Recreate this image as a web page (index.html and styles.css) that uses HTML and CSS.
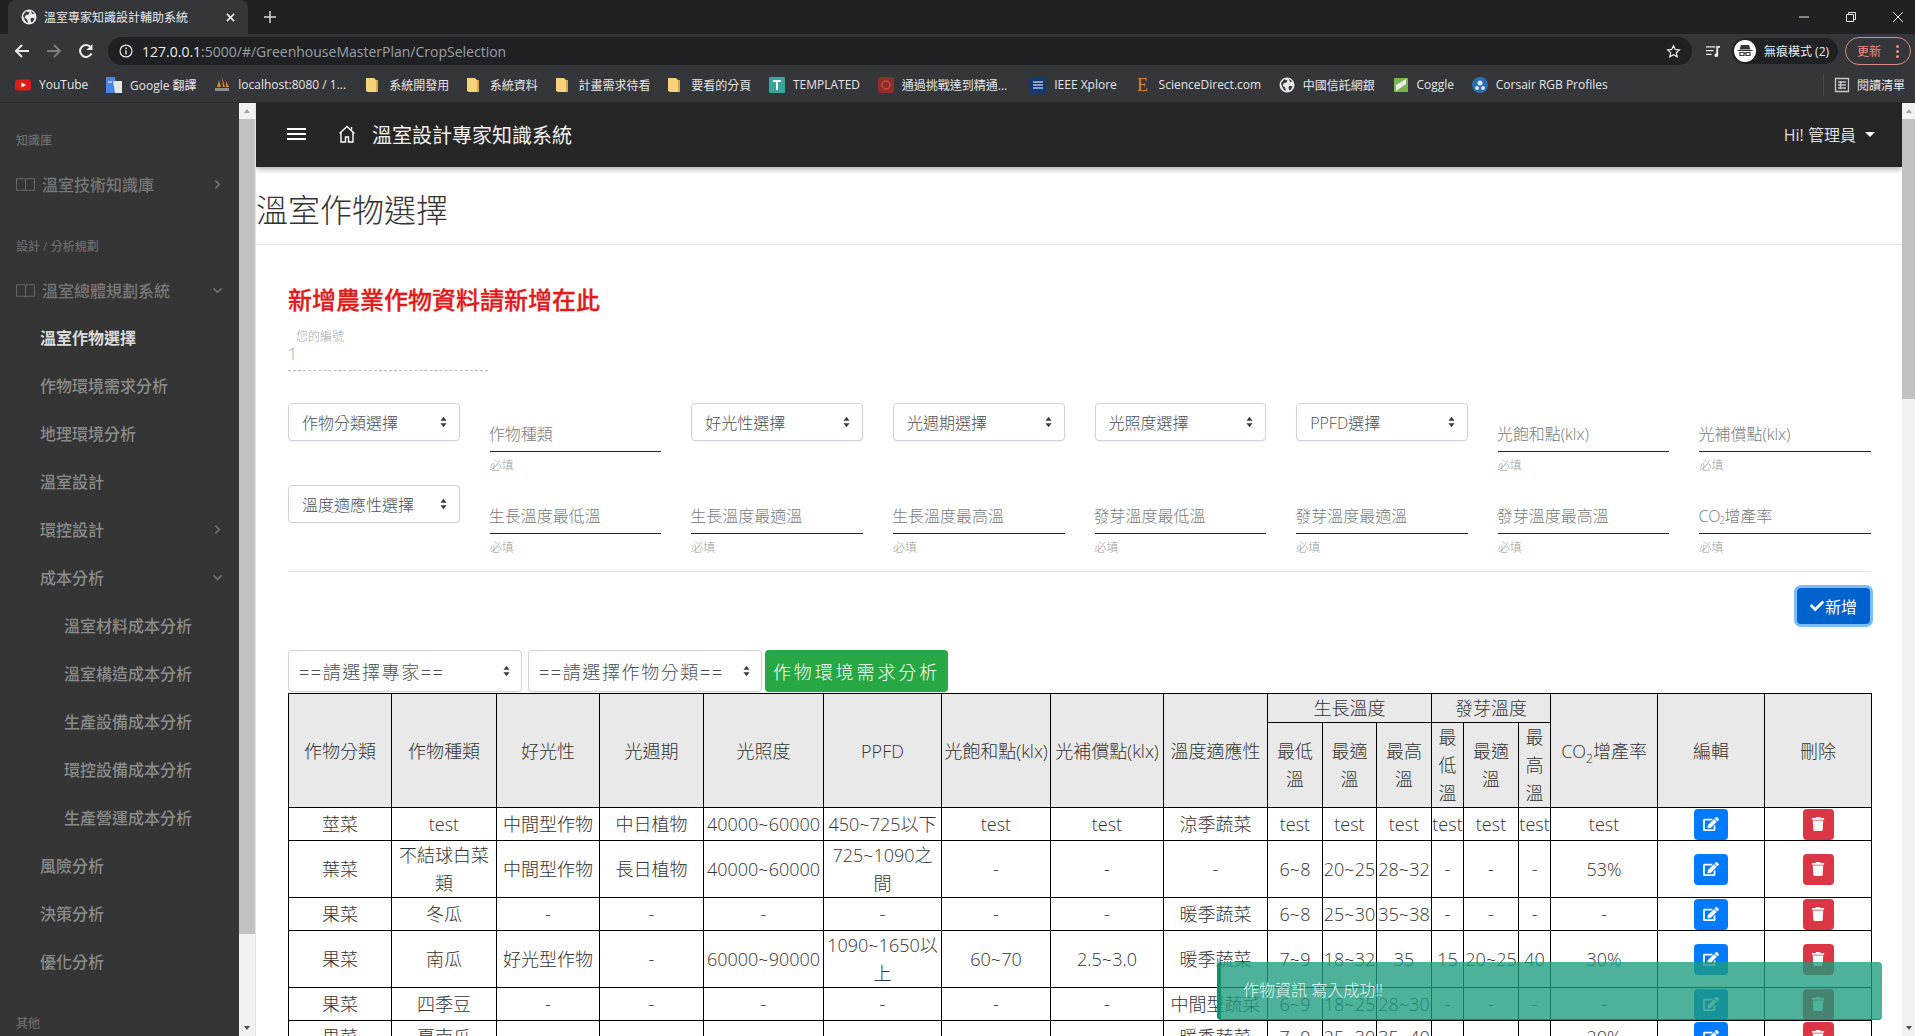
FILE: index.html
```html
<!DOCTYPE html>
<html lang="zh-Hant">
<head>
<meta charset="utf-8">
<title>溫室專家知識設計輔助系統</title>
<link rel="stylesheet" href="styles.css">
</head>
<body>

<svg class="sprites" width="0" height="0">
  <symbol id="i-edit" viewBox="0 0 576 512"><path fill="currentColor" d="M402.6 83.2l90.2 90.2c3.8 3.8 3.8 10 0 13.8L274.4 405.6l-92.8 10.3c-12.4 1.4-22.9-9.1-21.5-21.5l10.3-92.8L388.8 83.2c3.8-3.8 10-3.8 13.8 0zm162-22.9l-48.8-48.8c-15.2-15.2-39.9-15.2-55.2 0l-35.4 35.4c-3.8 3.8-3.8 10 0 13.8l90.2 90.2c3.8 3.8 10 3.8 13.8 0l35.4-35.4c15.2-15.3 15.2-40 0-55.2zM384 346.2V448H64V128h229.8c3.2 0 6.2-1.3 8.5-3.5l40-40c7.6-7.6 2.2-20.5-8.5-20.5H48C21.5 64 0 85.5 0 112v352c0 26.5 21.5 48 48 48h352c26.5 0 48-21.5 48-48V306.2c0-10.7-12.9-16-20.5-8.5l-40 40c-2.2 2.3-3.5 5.3-3.5 8.5z"/></symbol>
  <symbol id="i-trash" viewBox="0 0 448 512"><path fill="currentColor" d="M432 32H312l-9.4-18.7A24 24 0 0 0 281.1 0H166.8a23.72 23.72 0 0 0-21.4 13.3L136 32H16A16 16 0 0 0 0 48v32a16 16 0 0 0 16 16h416a16 16 0 0 0 16-16V48a16 16 0 0 0-16-16zM53.2 467a48 48 0 0 0 47.9 45h245.8a48 48 0 0 0 47.9-45L416 128H32z"/></symbol>
  <symbol id="i-globe" viewBox="0 0 16 16"><circle cx="8" cy="8" r="7.5" fill="currentColor"/><path fill="#35363a" d="M5 2.2 8.5 3.5 7.5 5.5 5 6 3.5 8.5 6 10.5 7 14 5 13 3 9.5 2 6.5zM10 9h3.5L12 12.5 10.5 13.5 9.5 11zM10 2l3.5 2.5-2.5.5z"/></symbol>
  <symbol id="i-folder" viewBox="0 0 12 16"><path fill="#f6d27a" d="M0 1h8l2 2v12H2l-2-1z"/><path fill="#d9a93f" d="M10 3h2v12h-2z"/></symbol>
  <symbol id="i-book" viewBox="0 0 18 14"><path fill="none" stroke="currentColor" d="M.5 1.5h7q1.500 0 1.500 1.500 0-1.500 1.500-1.500h7v11h-7q-1.500 0-1.500 1-0-1-1.500-1h-7zM9 3v10"/></symbol>
  <symbol id="i-chev-r" viewBox="0 0 8 12"><path fill="none" stroke="currentColor" stroke-width="2" d="M1.500 1.500 6 6l-4.500 4.500"/></symbol>
  <symbol id="i-chev-d" viewBox="0 0 12 8"><path fill="none" stroke="currentColor" stroke-width="2" d="M1.500 1.500 6 6l4.500-4.500"/></symbol>
  <symbol id="i-updown" viewBox="0 0 8 14"><path fill="currentColor" d="M4 1 7.500 5.500H.5zM4 13 .5 8.500h7z"/></symbol>
</svg>

<!-- browser frame -->
<div class="tabstrip">
  <div class="tab">
    <svg class="ic16 light"><use href="#i-globe"/></svg>
    <span class="tab-title">溫室專家知識設計輔助系統</span>
    <svg class="tab-close" viewBox="0 0 10 10"><path stroke="#e8eaed" stroke-width="1.800" d="M1 1l8 8M9 1l-8 8"/></svg>
  </div>
  <svg class="tab-new" viewBox="0 0 12 12"><path stroke="#d5d7da" stroke-width="1.500" d="M6 0v12M0 6h12"/></svg>
  <div class="win-btns">
    <svg viewBox="0 0 12 12"><path stroke="#e8eaed" d="M1 6h10"/></svg>
    <svg viewBox="0 0 12 12"><path fill="none" stroke="#e8eaed" d="M1.500 3.500h7v7h-7zM3.500 3.500v-2h7v7h-2"/></svg>
    <svg viewBox="0 0 12 12"><path stroke="#e8eaed" d="M1 1l10 10M11 1 1 11"/></svg>
  </div>
</div>

<div class="toolbar">
  <svg class="nav-ic" viewBox="0 0 16 16"><path fill="none" stroke="#e8eaed" stroke-width="2" d="M15 8H2M8 2 2 8l6 6"/></svg>
  <svg class="nav-ic" viewBox="0 0 16 16"><path fill="none" stroke="#7b7d80" stroke-width="2" d="M1 8h13M8 2l6 6-6 6"/></svg>
  <svg class="nav-ic" viewBox="0 0 16 16"><path fill="none" stroke="#e8eaed" stroke-width="2" d="M13.500 10.500A6 6 0 1 1 13 4.500"/><path fill="#e8eaed" d="M14.500 1v6h-6z"/></svg>
  <div class="omnibox">
    <svg class="info" viewBox="0 0 16 16"><circle cx="8" cy="8" r="6.800" fill="none" stroke="#e8eaed" stroke-width="1.400"/><path stroke="#e8eaed" stroke-width="1.600" d="M8 7v5M8 4v1.800"/></svg>
    <span class="url"><b>127.0.0.1</b>:5000/#/GreenhouseMasterPlan/CropSelection</span>
    <svg class="star" viewBox="0 0 16 16"><path fill="none" stroke="#e8eaed" stroke-width="1.300" d="M8 1.800l1.900 4 4.300.5-3.200 3 .9 4.300L8 11.400l-3.900 2.200.9-4.300-3.200-3 4.300-.5z"/></svg>
  </div>
  <svg class="media" viewBox="0 0 16 14"><path stroke="#e8eaed" stroke-width="1.300" d="M0 2h10M0 6h8M0 10h6"/><path fill="#e8eaed" d="M11 1h4v2h-2v8a2 2 0 1 1-2-2z"/></svg>
  <div class="incognito">
    <svg class="avatar" viewBox="0 0 22 22"><circle cx="11" cy="11" r="11" fill="#fff"/><path fill="#35363a" d="M7 5h8l1.500 4.500h-11zM3.500 10h15v1h-15z"/><path fill="none" stroke="#35363a" stroke-width="1.200" d="M6 12.500h4v3h-4zM12 12.500h4v3h-4zM10 13.500h2"/></svg>
    <span>無痕模式 (2)</span>
  </div>
  <div class="update"><span>更新</span><i></i></div>
</div>

<div class="bookmarks">
  <a class="bm"><svg class="ic16" viewBox="0 0 16 16"><rect y="2.500" width="16" height="11" rx="3" fill="#e01b1b"/><path fill="#fff" d="M6.500 5.500 11 8l-4.500 2.500z"/></svg>YouTube</a>
  <a class="bm"><svg class="ic16" viewBox="0 0 16 16"><path fill="#4a86e8" d="M0 0h9l2 16H0z"/><path fill="#e4e6e8" d="M7 4h9v12H9z"/><path stroke="#fff" d="M2 5h4"/></svg>Google 翻譯</a>
  <a class="bm bm-wide"><svg class="ic16" viewBox="0 0 16 16"><path fill="#d98a2b" d="M8 0l3 10H9zM5 3l2 7H3zM12 4l3 6h-3z"/><path fill="#8d8f91" d="M1 11h14v3H1z"/></svg>localhost:8080 / 1...</a>
  <a class="bm"><svg class="ic-f"><use href="#i-folder"/></svg>系統開發用</a>
  <a class="bm"><svg class="ic-f"><use href="#i-folder"/></svg>系統資料</a>
  <a class="bm"><svg class="ic-f"><use href="#i-folder"/></svg>計畫需求待看</a>
  <a class="bm"><svg class="ic-f"><use href="#i-folder"/></svg>要看的分頁</a>
  <a class="bm"><svg class="ic16" viewBox="0 0 16 16"><rect width="16" height="16" rx="1" fill="#35a79c"/><path stroke="#fff" stroke-width="2" d="M4 4h8M8 4v9"/></svg>TEMPLATED</a>
  <a class="bm bm-gap"><svg class="ic16" viewBox="0 0 16 16"><rect width="16" height="16" rx="2" fill="#8c2f2b"/><circle cx="8" cy="8" r="4" fill="none" stroke="#d0473f" stroke-width="1.500"/></svg>通過挑戰達到精通...</a>
  <a class="bm"><svg class="ic16" viewBox="0 0 16 16"><rect width="16" height="16" fill="#123a78"/><path stroke="#fff" d="M3 5h10M3 8h10M3 11h10"/></svg>IEEE Xplore</a>
  <a class="bm"><span class="glyph-e">E</span>ScienceDirect.com</a>
  <a class="bm"><svg class="ic16 light"><use href="#i-globe"/></svg>中國信託網銀</a>
  <a class="bm"><svg class="ic16" viewBox="0 0 16 16"><path fill="#7ab648" d="M1 1h14v14H1z"/><path fill="#e8eaed" d="M3 8l10-6v5L3 14z"/></svg>Coggle</a>
  <a class="bm"><svg class="ic16" viewBox="0 0 16 16"><circle cx="8" cy="8" r="8" fill="#2a6fb0"/><circle cx="8" cy="6" r="2.500" fill="#d6e6f5"/><circle cx="5" cy="11" r="2" fill="#d6e6f5"/><circle cx="11" cy="11" r="2" fill="#d6e6f5"/></svg>Corsair RGB Profiles</a>
  <div class="reading">
    <svg class="ic16" viewBox="0 0 16 16"><path fill="none" stroke="#c4c7c9" stroke-width="1.300" d="M1.500 1.500h13v13h-13zM4 5h8M4 8h8M4 11h8M6.500 4v8"/></svg>閱讀清單
  </div>
</div>

<!-- app -->
<div class="app">
  <aside class="sidebar">
    <nav class="side-nav">
      <p class="side-sec side-sec-first">知識庫</p>
      <a class="side-top"><svg class="book"><use href="#i-book"/></svg>溫室技術知識庫<svg class="chev-r"><use href="#i-chev-r"/></svg></a>
      <p class="side-sec">設計 / 分析規劃</p>
      <a class="side-top"><svg class="book"><use href="#i-book"/></svg>溫室總體規劃系統<svg class="chev-d"><use href="#i-chev-d"/></svg></a>
      <a class="side-item active">溫室作物選擇</a>
      <a class="side-item">作物環境需求分析</a>
      <a class="side-item">地理環境分析</a>
      <a class="side-item">溫室設計</a>
      <a class="side-item">環控設計<svg class="chev-r"><use href="#i-chev-r"/></svg></a>
      <a class="side-item">成本分析<svg class="chev-d"><use href="#i-chev-d"/></svg></a>
      <a class="side-item sub">溫室材料成本分析</a>
      <a class="side-item sub">溫室構造成本分析</a>
      <a class="side-item sub">生產設備成本分析</a>
      <a class="side-item sub">環控設備成本分析</a>
      <a class="side-item sub">生產營運成本分析</a>
      <a class="side-item">風險分析</a>
      <a class="side-item">決策分析</a>
      <a class="side-item">優化分析</a>
      <p class="side-sec side-sec-last">其他</p>
    </nav>
    <div class="scrollbar side-bar">
      <span class="arrow up"></span>
      <span class="thumb"></span>
      <span class="arrow down"></span>
    </div>
  </aside>

  <main class="main">
    <header class="topbar">
      <span class="burger"><i></i><i></i><i></i></span>
      <svg class="home" viewBox="0 0 18 18"><path fill="none" stroke="#fff" stroke-width="1.400" d="M1.500 8.500 9 1.500l7.500 7M3 7.500v9.500h4.500v-5h3v5H15v-9.500"/><path stroke="#fff" stroke-width="1.400" d="M13.500 2v3"/></svg>
      <span class="brand">溫室設計專家知識系統</span>
      <span class="user">Hi! 管理員<i class="caret"></i></span>
    </header>

    <div class="page">
      <h1 class="page-title">溫室作物選擇</h1>
      <div class="page-body">
        <h2 class="notice">新增農業作物資料請新增在此</h2>
        <div class="your-id">
          <label>您的編號</label>
          <span>1</span>
        </div>

        <form class="crop-form">
          <div class="select">作物分類選擇<svg><use href="#i-updown"/></svg></div>
          <div class="field"><span class="ph">作物種類</span><small>必填</small></div>
          <div class="select">好光性選擇<svg><use href="#i-updown"/></svg></div>
          <div class="select">光週期選擇<svg><use href="#i-updown"/></svg></div>
          <div class="select">光照度選擇<svg><use href="#i-updown"/></svg></div>
          <div class="select">PPFD選擇<svg><use href="#i-updown"/></svg></div>
          <div class="field"><span class="ph">光飽和點(klx)</span><small>必填</small></div>
          <div class="field"><span class="ph">光補償點(klx)</span><small>必填</small></div>

          <div class="select">溫度適應性選擇<svg><use href="#i-updown"/></svg></div>
          <div class="field"><span class="ph">生長溫度最低溫</span><small>必填</small></div>
          <div class="field"><span class="ph">生長溫度最適溫</span><small>必填</small></div>
          <div class="field"><span class="ph">生長溫度最高溫</span><small>必填</small></div>
          <div class="field"><span class="ph">發芽溫度最低溫</span><small>必填</small></div>
          <div class="field"><span class="ph">發芽溫度最適溫</span><small>必填</small></div>
          <div class="field"><span class="ph">發芽溫度最高溫</span><small>必填</small></div>
          <div class="field"><span class="ph">CO<sub>2</sub>增產率</span><small>必填</small></div>
        </form>

        <div class="form-actions">
          <button class="btn-add" type="button"><svg viewBox="0 0 512 512"><path fill="currentColor" d="M173.898 439.404l-166.4-166.4c-9.997-9.997-9.997-26.206 0-36.204l36.203-36.204c9.997-9.998 26.207-9.998 36.204 0L192 312.690 432.095 72.596c9.997-9.997 26.207-9.997 36.204 0l36.203 36.204c9.997 9.997 9.997 26.206 0 36.204l-294.400 294.401c-9.998 9.997-26.207 9.997-36.204-.001z"/></svg>新增</button>
        </div>

        <div class="filters">
          <div class="select select-lg">==請選擇專家==<svg><use href="#i-updown"/></svg></div>
          <div class="select select-lg">==請選擇作物分類==<svg><use href="#i-updown"/></svg></div>
          <button class="btn-analyse" type="button">作物環境需求分析</button>
        </div>

        <table class="crop-table">
          <colgroup>
            <col><col><col><col><col><col><col><col><col><col><col><col><col><col><col><col><col><col>
          </colgroup>
          <thead>
            <tr class="head-a">
              <th rowspan="2">作物分類</th>
              <th rowspan="2">作物種類</th>
              <th rowspan="2">好光性</th>
              <th rowspan="2">光週期</th>
              <th rowspan="2">光照度</th>
              <th rowspan="2">PPFD</th>
              <th rowspan="2">光飽和點(klx)</th>
              <th rowspan="2">光補償點(klx)</th>
              <th rowspan="2">溫度適應性</th>
              <th colspan="3">生長溫度</th>
              <th colspan="3">發芽溫度</th>
              <th rowspan="2">CO<sub>2</sub>增產率</th>
              <th rowspan="2">編輯</th>
              <th rowspan="2">刪除</th>
            </tr>
            <tr class="head-b">
              <th>最低溫</th><th>最適溫</th><th>最高溫</th>
              <th>最低溫</th><th>最適溫</th><th>最高溫</th>
            </tr>
          </thead>
          <tbody>
            <tr>
              <td>莖菜</td><td>test</td><td>中間型作物</td><td>中日植物</td><td>40000~60000</td><td>450~725以下</td><td>test</td><td>test</td><td>涼季蔬菜</td>
              <td>test</td><td>test</td><td>test</td><td>test</td><td>test</td><td>test</td><td>test</td>
              <td><a class="act edit"><svg><use href="#i-edit"/></svg></a></td>
              <td><a class="act del"><svg><use href="#i-trash"/></svg></a></td>
            </tr>
            <tr>
              <td>葉菜</td><td>不結球白菜類</td><td>中間型作物</td><td>長日植物</td><td>40000~60000</td><td>725~1090之間</td><td>-</td><td>-</td><td>-</td>
              <td>6~8</td><td>20~25</td><td>28~32</td><td>-</td><td>-</td><td>-</td><td>53%</td>
              <td><a class="act edit"><svg><use href="#i-edit"/></svg></a></td>
              <td><a class="act del"><svg><use href="#i-trash"/></svg></a></td>
            </tr>
            <tr>
              <td>果菜</td><td>冬瓜</td><td>-</td><td>-</td><td>-</td><td>-</td><td>-</td><td>-</td><td>暖季蔬菜</td>
              <td>6~8</td><td>25~30</td><td>35~38</td><td>-</td><td>-</td><td>-</td><td>-</td>
              <td><a class="act edit"><svg><use href="#i-edit"/></svg></a></td>
              <td><a class="act del"><svg><use href="#i-trash"/></svg></a></td>
            </tr>
            <tr>
              <td>果菜</td><td>南瓜</td><td>好光型作物</td><td>-</td><td>60000~90000</td><td>1090~1650以上</td><td>60~70</td><td>2.5~3.0</td><td>暖季蔬菜</td>
              <td>7~9</td><td>18~32</td><td>35</td><td>15</td><td>20~25</td><td>40</td><td>30%</td>
              <td><a class="act edit"><svg><use href="#i-edit"/></svg></a></td>
              <td><a class="act del"><svg><use href="#i-trash"/></svg></a></td>
            </tr>
            <tr>
              <td>果菜</td><td>四季豆</td><td>-</td><td>-</td><td>-</td><td>-</td><td>-</td><td>-</td><td>中間型蔬菜</td>
              <td>6~9</td><td>18~25</td><td>28~30</td><td>-</td><td>-</td><td>-</td><td>-</td>
              <td><a class="act edit"><svg><use href="#i-edit"/></svg></a></td>
              <td><a class="act del"><svg><use href="#i-trash"/></svg></a></td>
            </tr>
            <tr>
              <td>果菜</td><td>夏南瓜</td><td>-</td><td>-</td><td>-</td><td>-</td><td>-</td><td>-</td><td>暖季蔬菜</td>
              <td>7~9</td><td>25~30</td><td>35~40</td><td>-</td><td>-</td><td>-</td><td>20%</td>
              <td><a class="act edit"><svg><use href="#i-edit"/></svg></a></td>
              <td><a class="act del"><svg><use href="#i-trash"/></svg></a></td>
            </tr>
          </tbody>
        </table>
      </div>
    </div>

    <div class="toast">作物資訊 寫入成功!!</div>
  </main>

  <div class="scrollbar main-bar">
    <span class="arrow up"></span>
    <span class="thumb"></span>
    <span class="arrow down"></span>
  </div>
</div>

</body>
</html>
```

FILE: styles.css
```css
* {
  box-sizing: border-box;
}

html, body {
  height: 100%;
  margin: 0;
  overflow: hidden;
}

body {
  display: flex;
  flex-direction: column;
  font-family: "Open Sans", "Noto Sans CJK TC", sans-serif;
  font-size: 16px;
  background-color: white;
}

.sprites {
  position: absolute;
}

/* browser frame */
.tabstrip {
  display: flex;
  align-items: center;
  flex: 0 0 34px;
  background-color: #202124;
  padding-left: 8px;
}

.tab {
  display: flex;
  align-items: center;
  width: 240px;
  height: 34px;
  padding: 0 11px 0 13px;
  background-color: #35363a;
  border-radius: 8px 8px 0 0;
  color: #e8eaed;
  font-size: 12px;
}

.tab-title {
  flex: 1;
  margin-left: 7px;
  white-space: nowrap;
}

.tab-close {
  width: 9px;
  height: 9px;
  margin-right: 2px;
}

.tab-new {
  width: 12px;
  height: 12px;
  margin-left: 16px;
}

.win-btns {
  display: flex;
  gap: 35px;
  margin-left: auto;
  margin-right: 11px;
}

.win-btns svg {
  width: 12px;
  height: 12px;
}

.ic16 {
  flex: none;
  width: 16px;
  height: 16px;
}

.light {
  color: #e8eaed;
}

.toolbar {
  display: flex;
  align-items: center;
  flex: 0 0 34px;
  padding-left: 14px;
  background-color: #35363a;
}

.nav-ic {
  width: 16px;
  height: 16px;
  margin-right: 16px;
}

.omnibox {
  display: flex;
  align-items: center;
  width: 1584px;
  height: 28px;
  margin-left: -2px;
  padding: 0 11px;
  background-color: #202124;
  border-radius: 14px;
}

.info {
  width: 14px;
  height: 14px;
}

.url {
  flex: 1;
  margin-left: 9px;
  color: #9aa0a6;
  font-size: 14px;
  white-space: nowrap;
}

.url b {
  color: #e8eaed;
  font-weight: 400;
}

.star {
  width: 15px;
  height: 15px;
  margin-right: 0;
}

.media {
  width: 15px;
  height: 13px;
  margin-left: 14px;
}

.incognito {
  display: flex;
  align-items: center;
  height: 26px;
  margin-left: 11px;
  padding: 0 9px 0 2px;
  background-color: #202124;
  border-radius: 13px;
  color: #e8eaed;
  font-size: 12px;
  white-space: nowrap;
}

.avatar {
  width: 22px;
  height: 22px;
  margin-right: 8px;
}

.update {
  display: flex;
  align-items: center;
  justify-content: space-between;
  width: 66px;
  height: 28px;
  margin-left: 7px;
  padding: 0 11px 0 11px;
  border: 1px solid #d98d86;
  border-radius: 14px;
  color: #f28b82;
  font-size: 12px;
}

.update i {
  width: 3px;
  height: 3px;
  background-color: #f28b82;
  border-radius: 50%;
  box-shadow: 0 -5px 0 #f28b82, 0 5px 0 #f28b82;
}

.bookmarks {
  display: flex;
  align-items: center;
  flex: 0 0 35px;
  padding: 0 0 1px 15px;
  background-color: #35363a;
  border-bottom: 1px solid #2b2c2f;
  color: #e3e5e7;
  font-size: 12px;
  white-space: nowrap;
}

.bm {
  display: flex;
  align-items: center;
  gap: 8px;
  margin-right: 17.700px;
}

.bm-wide {
  margin-right: 20px;
}

.bm-gap {
  margin-right: 23px;
}

.ic-f {
  width: 12px;
  height: 16px;
  margin-right: 3px;
}

.glyph-e {
  width: 16px;
  color: #d98a2b;
  font-family: "Liberation Serif", serif;
  font-size: 18px;
  line-height: 16px;
  text-align: center;
}

.reading {
  display: flex;
  align-items: center;
  gap: 7px;
  height: 22px;
  margin-left: auto;
  margin-right: 10px;
  padding-left: 10px;
  border-left: 1px solid #4a4b4f;
}

/* app layout */
.app {
  display: flex;
  flex: 1;
  min-height: 0;
}

.sidebar {
  display: flex;
  flex: 0 0 256px;
  border-right: 1px solid #e4e4e4;
  background-color: #353535;
}

.side-nav {
  flex: 1;
  overflow: hidden;
}

.side-sec {
  margin: 30px 0 0 16px;
  height: 18px;
  color: #6c6c6c;
  font-size: 12px;
  font-weight: 500;
  line-height: 18px;
}

.side-sec-first {
  margin-top: 29px;
}

.side-sec-last {
  margin-top: 30px;
}

.side-top,
.side-item {
  display: flex;
  align-items: center;
  height: 48px;
  color: #8b8b8b;
  font-weight: 500;
  white-space: nowrap;
}

.side-top {
  padding-left: 16px;
  color: #777;
}

.side-sec + .side-top {
  margin-top: 10px;
}

.side-top + .side-item {
  margin-top: -1px;
}

.book {
  width: 19px;
  height: 15px;
  margin-right: 7px;
  color: #666;
}

.side-item {
  padding-left: 40px;
}

.side-item.sub {
  padding-left: 64px;
}

.side-item.active {
  color: #dcdcdc;
  font-weight: 700;
}

.chev-r,
.chev-d {
  margin-left: auto;
  color: #707070;
}

.chev-r {
  width: 7px;
  height: 11px;
  margin-right: 18px;
}

.chev-d {
  width: 11px;
  height: 7px;
  margin-right: 16px;
}

.scrollbar {
  display: flex;
  flex-direction: column;
  align-items: stretch;
  background-color: #f1f1f1;
}

.side-bar {
  flex: 0 0 16px;
}

.main-bar {
  flex: 0 0 13px;
}

.arrow {
  display: block;
  position: relative;
  flex: 0 0 16px;
}

.arrow.down {
  margin-top: auto;
}

.arrow::after {
  content: "";
  position: absolute;
  left: 50%;
  top: 6px;
  margin-left: -3px;
  border-left: 3px solid transparent;
  border-right: 3px solid transparent;
}

.arrow.up::after {
  border-bottom: 4px solid #a3a3a3;
}

.arrow.down::after {
  border-top: 4px solid #505050;
}

.thumb {
  display: block;
  background-color: #c1c1c1;
}

.side-bar .thumb {
  height: 815px;
}

.main-bar .thumb {
  height: 280px;
}

/* main */
.main {
  position: relative;
  flex: 1;
  min-width: 0;
  overflow: hidden;
}

.topbar {
  position: relative;
  z-index: 2;
  display: flex;
  align-items: center;
  height: 64px;
  padding: 0 27px 2px 31px;
  background-color: #262626;
  box-shadow: 0 2px 6px rgba(0, 0, 0, .35);
  color: white;
}

.burger {
  display: flex;
  flex-direction: column;
  gap: 3px;
  width: 19px;
}

.burger i {
  height: 2px;
  background-color: white;
}

.home {
  width: 18px;
  height: 18px;
  margin-left: 32px;
}

.brand {
  margin-left: 16px;
  font-size: 20px;
  color: #f2f2f2;
}

.user {
  display: flex;
  align-items: center;
  margin-left: auto;
  color: #dedede;
}

.caret {
  width: 0;
  height: 0;
  margin-left: 9px;
  border-top: 5px solid white;
  border-left: 5px solid transparent;
  border-right: 5px solid transparent;
}

.page-title {
  height: 78px;
  margin: 0;
  border-bottom: 1px solid #e4e4e4;
  color: #333;
  font-size: 32px;
  font-weight: 300;
  line-height: 85px;
}

.page-body {
  padding: 0 31px 0 32px;
}

.notice {
  margin: 38px 0 0;
  color: #e01b1b;
  font-size: 24px;
  font-weight: 500;
  line-height: 34px;
  -webkit-text-stroke: .3px #e01b1b;
}

.your-id {
  width: 200px;
  height: 43px;
  margin-top: 11px;
  border-bottom: 1px dashed #b9b9b9;
  color: #a5a5a5;
  font-weight: 300;
}

.your-id label {
  display: block;
  height: 15px;
  padding-left: 8px;
  font-size: 12px;
  line-height: 18px;
}

.your-id span {
  display: block;
  line-height: 22px;
}

.crop-form {
  display: grid;
  grid-template-columns: repeat(8, 1fr);
  grid-auto-rows: 82px;
  column-gap: 30px;
  height: 169px;
  margin-top: 32px;
  border-bottom: 1px solid #e6e6e6;
}

.select {
  display: flex;
  align-items: center;
  justify-content: space-between;
  height: 38px;
  padding: 0 12px 0 13px;
  background-color: white;
  border: 1px solid #ced4da;
  border-radius: 4px;
  color: #495057;
  font-weight: 300;
  box-shadow: 0 1px 2px rgba(0, 0, 0, .06);
}

.select svg {
  flex: none;
  width: 7px;
  height: 12px;
  color: #343a40;
}

.field {
  padding-top: 11px;
}

.ph {
  display: flex;
  align-items: center;
  height: 38px;
  padding-top: 3px;
  border-bottom: 1px solid #222;
  color: #7a7a7a;
  font-weight: 300;
  line-height: 35px;
  text-indent: -1px;
}

.ph sub {
  font-size: 10px;
  line-height: 0;
  margin-top: 8px;
}

.field small {
  display: block;
  margin-top: 6px;
  color: #9a9a9a;
  font-size: 12px;
  font-weight: 300;
  line-height: 16px;
}

.form-actions {
  display: flex;
  justify-content: flex-end;
  padding: 16px 1px 0 0;
  height: 51px;
}

.btn-add {
  display: flex;
  align-items: center;
  justify-content: center;
  width: 73px;
  height: 36px;
  padding: 0;
  background-color: #0062cc;
  border: none;
  border-radius: 4px;
  box-shadow: 0 0 0 3px rgba(38, 143, 255, .6);
  color: white;
  font-family: inherit;
  font-size: 16px;
}

.btn-add svg {
  width: 14px;
  height: 14px;
  margin-right: 1px;
}

.filters {
  display: flex;
  gap: 6px;
  margin-top: 27px;
  height: 42px;
}

.select-lg {
  width: 234px;
  height: 42px;
  padding: 0 11px 0 10px;
  font-size: 18px;
  letter-spacing: 1.600px;
}

.btn-analyse {
  width: 183px;
  height: 42px;
  margin-left: -3px;
  padding: 0;
  background-color: #28a745;
  border: none;
  border-radius: 4px;
  color: white;
  font-family: inherit;
  font-size: 18px;
  font-weight: 300;
  letter-spacing: 2.900px;
}

/* table */
.crop-table {
  width: 1583px;
  margin-top: 1px;
  table-layout: fixed;
  border-collapse: collapse;
  color: #333;
  font-size: 18px;
  font-weight: 300;
  line-height: 28px;
  text-align: center;
}

.crop-table col:nth-child(1) { width: 103px; }
.crop-table col:nth-child(2) { width: 105px; }
.crop-table col:nth-child(3) { width: 103px; }
.crop-table col:nth-child(4) { width: 104px; }
.crop-table col:nth-child(5) { width: 120px; }
.crop-table col:nth-child(6) { width: 118px; }
.crop-table col:nth-child(7) { width: 109px; }
.crop-table col:nth-child(8) { width: 113px; }
.crop-table col:nth-child(9) { width: 104px; }
.crop-table col:nth-child(10) { width: 55px; }
.crop-table col:nth-child(11) { width: 54px; }
.crop-table col:nth-child(12) { width: 55px; }
.crop-table col:nth-child(13) { width: 32px; }
.crop-table col:nth-child(14) { width: 55px; }
.crop-table col:nth-child(15) { width: 32px; }
.crop-table col:nth-child(16) { width: 107px; }
.crop-table col:nth-child(17) { width: 107px; }
.crop-table col:nth-child(18) { width: 107px; }

.crop-table th,
.crop-table td {
  padding: 0;
  border: 1px solid black;
  word-break: break-all;
}

.crop-table th {
  background-color: #e9e9e9;
  font-weight: 300;
}

.head-a th {
  height: 29px;
}

.head-b th {
  height: 85px;
  padding: 0 5px;
}

.crop-table td {
  height: 33px;
}

.crop-table sub {
  font-size: 12px;
  line-height: 0;
}

.act {
  display: flex;
  align-items: center;
  justify-content: center;
  height: 31px;
  margin: 0 auto;
  border-radius: 4px;
  color: white;
}

.act.edit {
  width: 34px;
  background-color: #007bff;
}

.act.del {
  width: 31px;
  background-color: #dc3545;
}

.act svg {
  width: 16px;
  height: 14px;
}

.toast {
  position: absolute;
  z-index: 3;
  left: 961px;
  bottom: 16px;
  width: 665px;
  height: 58px;
  padding: 15px 0 0 22px;
  background-color: rgba(28, 155, 125, .78);
  border-left: 4px solid rgba(10, 140, 105, .9);
  border-bottom: 1px solid rgba(10, 140, 105, .9);
  border-radius: 4px;
  color: #e6f5f1;
  font-weight: 300;
  line-height: 26px;
}
```
